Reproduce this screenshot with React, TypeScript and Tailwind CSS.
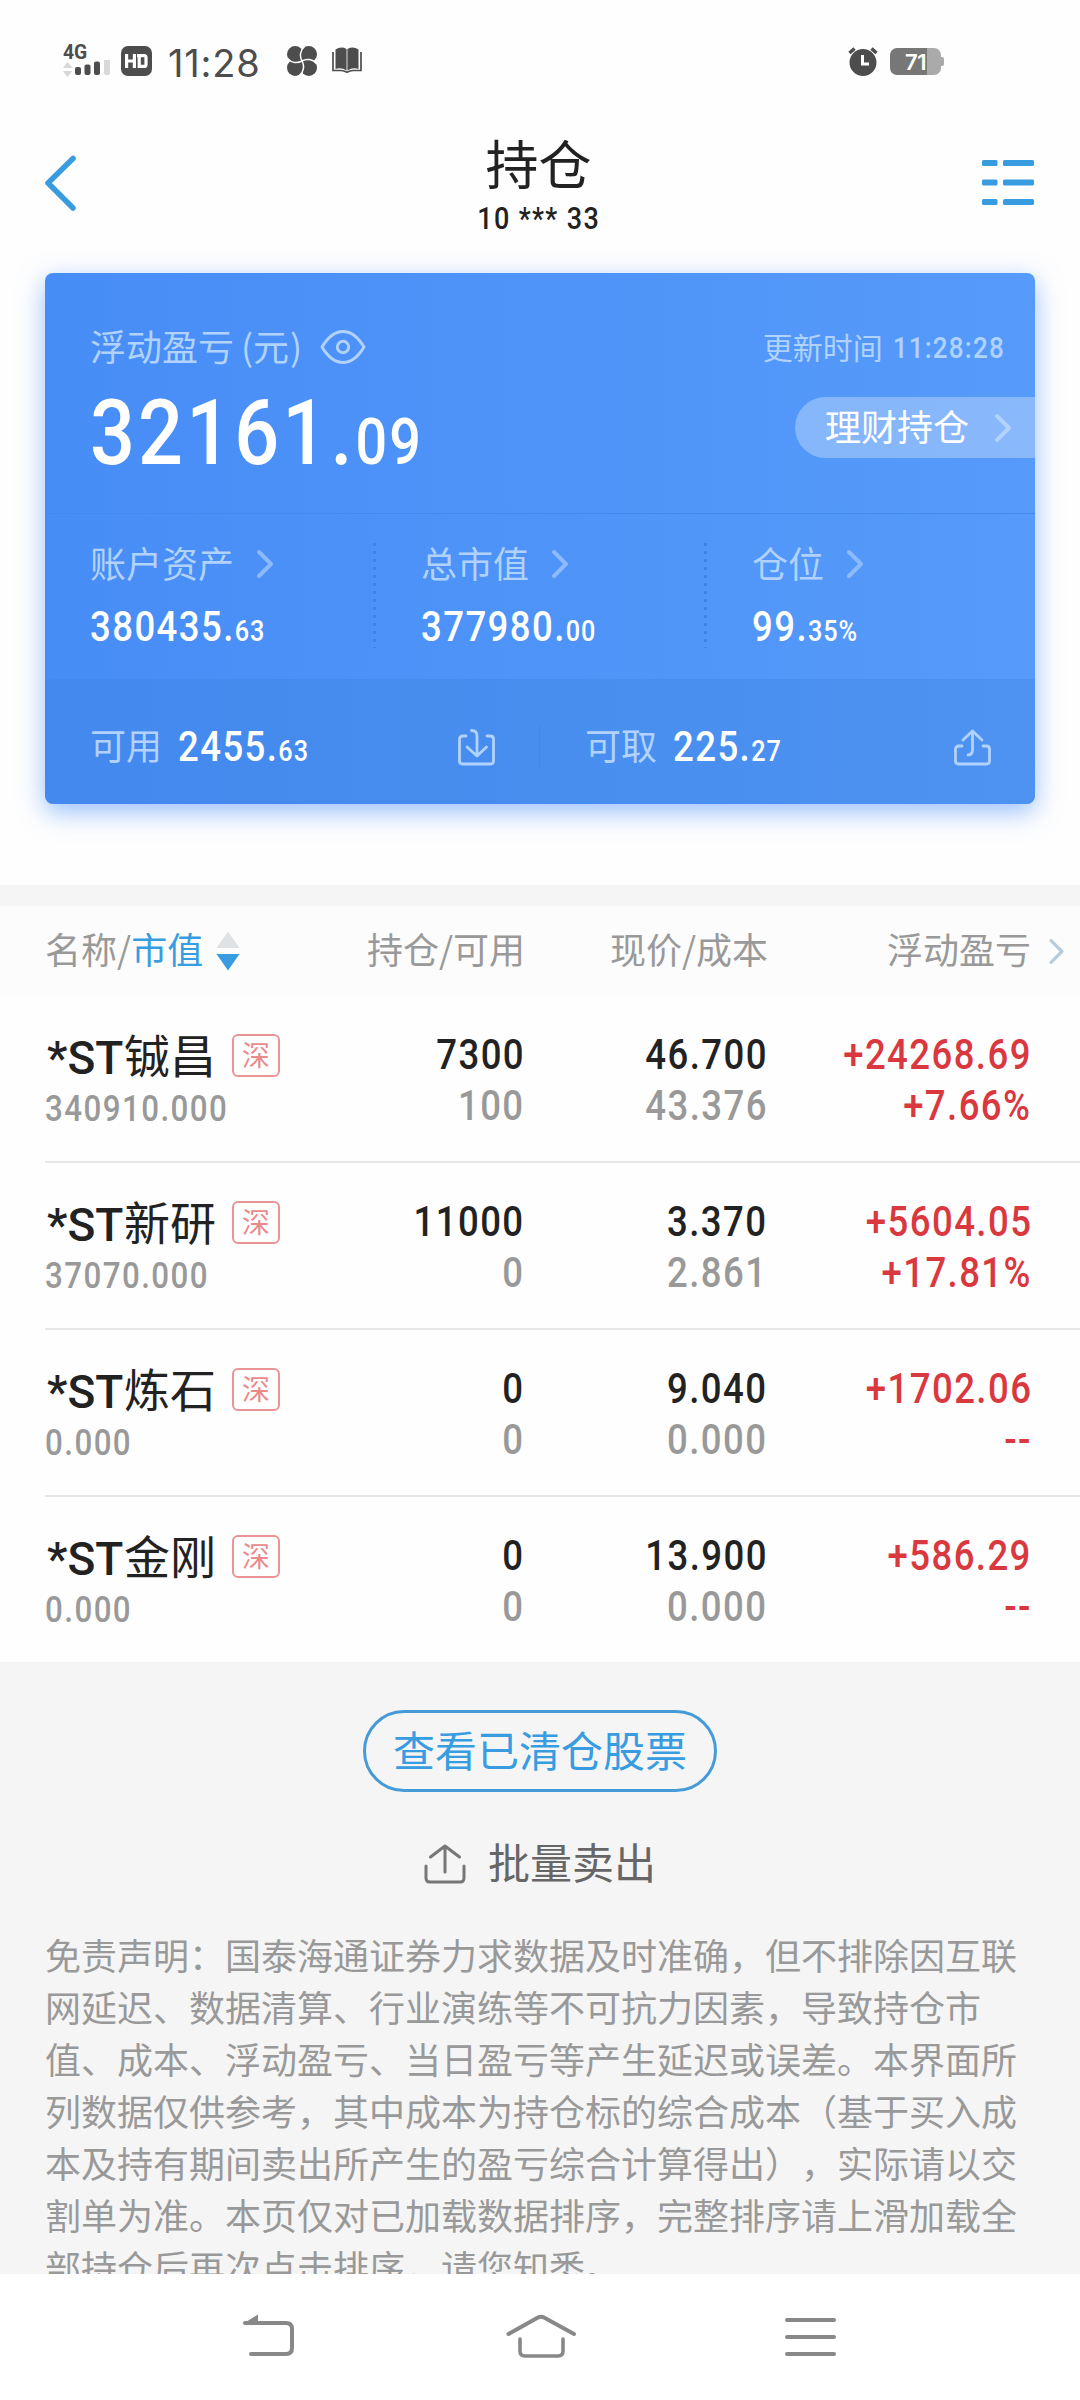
import React from "react";

const CJK = "font-['Noto_Sans_CJK_SC',sans-serif]";

/* Condensed numerals; `right` keeps the right edge fixed when narrowing. */
function Num({ children, right = false, className = "" }: { children: React.ReactNode; right?: boolean; className?: string }) {
  return (
    <span
      className={`inline-block whitespace-nowrap font-['Roboto',sans-serif] font-medium tracking-[0.039em] scale-x-[0.87] leading-none ${
        right ? "origin-right -mr-[0.02em]" : "origin-left"
      } ${className}`}
    >
      {children}
    </span>
  );
}

function Chevron({ className = "", w = 18, h = 30, sw = 4 }: { className?: string; w?: number; h?: number; sw?: number }) {
  return (
    <svg className={`shrink-0 ${className}`} width={w} height={h} viewBox="0 0 18 30" fill="none" stroke="currentColor" strokeWidth={sw} strokeLinecap="round" strokeLinejoin="round">
      <path d="M3 3 L15 15 L3 27" />
    </svg>
  );
}

function StatusBar() {
  return (
    <div className="flex h-[123px] shrink-0 items-start pl-[63px] text-[#4d4d4d]">
      <div className="mt-[44px] w-[47px]">
        <div className="h-[16px] w-[25px] origin-left scale-x-[0.92] font-['Roboto',sans-serif] text-[21px] leading-[16px] font-bold">4G</div>
        <svg width="47" height="19" viewBox="0 0 47 19" className="block">
          <path d="M4.500 2 L9.500 8 H0 Z M0 11 H9.500 L4.500 17 Z" fill="#d8d8d8" />
          <rect x="12" y="7" width="6" height="8" rx="2" fill="#4d4d4d" />
          <rect x="21.500" y="4.500" width="6" height="10.500" rx="2" fill="#4d4d4d" />
          <rect x="31" y="1.500" width="6" height="13.500" rx="2" fill="#4d4d4d" />
          <rect x="41" y="-1" width="6" height="16" rx="2" fill="#d9d9d9" />
        </svg>
      </div>
      <div className="mt-[46px] ml-[11px] flex h-[30px] w-[31px] items-center justify-center rounded-[7px] bg-[#4d4d4d]">
        <svg width="31" height="30" viewBox="0 0 31 30" fill="none" stroke="#fff" strokeWidth="3.200">
          <path d="M5.600 8 V22 M13.400 8 V22 M5.600 15 H13.400 M16 9.600 H23 Q25 9.600 25 11.600 V18.400 Q25 20.400 23 20.400 H18.200 V9.600" />
        </svg>
      </div>
      <div className="mt-[44px] ml-[16px] w-[92px] whitespace-nowrap font-['Inter',sans-serif] text-[38px] leading-[38px] tracking-[0.8px]">11:28</div>
      <svg className="mt-[46px] ml-[27px]" width="30" height="30" viewBox="0 0 30 30">
        <g fill="#4d4d4d">
          <circle cx="8.200" cy="8.200" r="8.200" />
          <circle cx="21.800" cy="8.200" r="8.200" />
          <circle cx="21.800" cy="21.800" r="8.200" />
          <circle cx="8.200" cy="21.800" r="8.200" />
          <rect x="10" y="10" width="10" height="10" />
        </g>
        <g fill="none" stroke="#fefefe" strokeWidth="1.500">
          {[0, 90, 180, 270].map((a) => (
            <path key={a} transform={`rotate(${a} 15 15)`} d="M15 15 C12.500 10.500 12.800 4.500 17.500 0.500" />
          ))}
        </g>
      </svg>
      <svg className="mt-[47px] ml-[15px]" width="30" height="28" viewBox="0 0 30 28">
        <path d="M3.500 2.500 Q9 -1 14.600 2 V23.500 Q9 20 3.500 22 Z M26.500 2.500 Q21 -1 15.400 2 V23.500 Q21 20 26.500 22 Z" fill="#4d4d4d" />
        <path d="M1 5 V23.500 H9 Q12 23.500 15 25.200 Q18 23.500 21 23.500 H29 V5" fill="none" stroke="#4d4d4d" strokeWidth="1.700" />
      </svg>
      <svg className="mt-[47px] ml-[486px]" width="30" height="30" viewBox="0 0 30 30">
        <circle cx="15" cy="15.500" r="13.500" fill="#4d4d4d" />
        <path d="M1.500 6 L6.500 1.500 M28.500 6 L23.500 1.500" stroke="#4d4d4d" strokeWidth="3.500" />
        <path d="M14.500 8 V17 H21" fill="none" stroke="#fff" strokeWidth="3" />
      </svg>
      <div className="mt-[48px] ml-[12px] flex">
        <div className="flex h-[27px] w-[51px] items-center justify-center rounded-[7px] bg-[linear-gradient(90deg,#777_0,#777_37px,#aaa_37px)] font-['Inter',sans-serif] text-[22px] leading-none font-semibold tracking-[-0.500px] text-white">71</div>
        <div className="mt-[9px] h-[9px] w-[3px] rounded-r-[2px] bg-[#aaa]" />
      </div>
    </div>
  );
}

function Header() {
  return (
    <div className="flex h-[150px] shrink-0 items-start justify-between pr-[46px] pl-[43px] text-[#222]">
      <svg className="mt-[30px]" width="52" height="60" viewBox="0 0 52 60" fill="none" stroke="#389ce0" strokeWidth="5.500" strokeLinecap="round" strokeLinejoin="round">
        <path d="M30 5.500 L5 30 L30 55" />
      </svg>
      <div className="flex flex-col items-center">
        <div className={`${CJK} mt-[13px] text-[53px] leading-[53px]`}>持仓</div>
        <div className="mt-[14px] flex h-[32px] w-[122px] justify-center">
          <Num className="!origin-center text-[31px] !tracking-[0.051em]">10 *** 33</Num>
        </div>
      </div>
      <svg className="mt-[35px]" width="52" height="50" viewBox="0 0 52 50" fill="#389ce0">
        {[2, 21.500, 41].map((y) => (
          <g key={y}>
            <rect x="0" y={y} width="15.500" height="6" rx="1.500" />
            <rect x="21" y={y} width="31" height="6" rx="1.500" />
          </g>
        ))}
      </svg>
    </div>
  );
}

/* Fractional part set smaller, with tracking relative to its own size. */
function Dec({ children, className = "text-[29px]" }: { children: React.ReactNode; className?: string }) {
  return <span className={`tracking-[0.039em] ${className}`}>{children}</span>;
}

function Stat({ label, int, dec }: { label: string; int: string; dec: string }) {
  return (
    <div className="w-[331px] shrink-0 pt-[32px] last:w-[280px]">
      <div className="flex items-center text-[#b1d2fc]">
        <span className={`${CJK} h-[36px] text-[36px] leading-[32px]`}>{label}</span>
        <Chevron className="ml-[22px] text-[#8dbafb]" />
      </div>
      <div className="mt-[24px] h-[44px] text-white">
        <Num className="text-[42px]">
          {int}<Dec>{dec}</Dec>
        </Num>
      </div>
    </div>
  );
}

function DottedRule() {
  return <div className="mt-[29px] -ml-[48px] mr-[45px] h-[105px] w-[3px] shrink-0 bg-[repeating-linear-gradient(180deg,#3f85e8_0,#3f85e8_3px,transparent_3px,transparent_8px)]" />;
}

function Card() {
  return (
    <div className="mx-[45px] h-[531px] shrink-0 rounded-[8px] bg-[linear-gradient(90deg,#478df6,#4d93f8_45%,#569bfa)] shadow-[0_8px_26px_rgba(70,141,250,0.55)]">
      <div className="flex h-[241px] justify-between border-b border-[#448aee]">
        <div className="pl-[45px]">
          <div className="mt-[54px] flex h-[40px] items-center text-[#b1d2fc]">
            <span className={`${CJK} text-[36px] leading-[36px] -mt-[5px]`}>浮动盈亏</span>
            <span className={`${CJK} ml-[7px] flex text-[36px] leading-[36px] -mt-[5px]`}>
              <span className="w-[12px]">(</span><span>元</span><span className="ml-[1px]">)</span>
            </span>
            <svg className="ml-[18px] -mt-[1px]" width="46" height="36" viewBox="0 0 46 36" fill="none" stroke="#b1d2fc" strokeWidth="3">
              <path d="M2 18 C5 13 12 2.500 23 2.500 C34 2.500 41 13 44 18 C41 23 34 33.500 23 33.500 C12 33.500 5 23 2 18 Z" strokeLinejoin="round" />
              <circle cx="23" cy="18" r="5.700" />
            </svg>
          </div>
          <div className="mt-[21px] text-white">
            <Num className="text-[91px]">
              32161.<Dec className="text-[64px]">09</Dec>
            </Num>
          </div>
        </div>
        <div className="flex flex-col items-end">
          <div className="mt-[54px] mr-[31px] flex h-[40px] items-center text-[#b1d2fc]">
            <span className={`${CJK} -mt-[3px] text-[30px] leading-[30px]`}>更新时间</span>
            <Num right className="-ml-[7px] mt-[2px] text-[30px] !tracking-[0.045em]">11:28:28</Num>
          </div>
          <div className="mt-[30px] flex h-[61px] w-[240px] items-center rounded-l-full bg-white/30 pl-[30px] text-white">
            <span className={`${CJK} -mt-[5px] text-[36px] leading-[36px]`}>理财持仓</span>
            <Chevron className="ml-[25px] text-[#b4d2fc]" />
          </div>
        </div>
      </div>
      <div className="flex h-[165px] pl-[45px]">
        <Stat label="账户资产" int="380435." dec="63" />
        <DottedRule />
        <Stat label="总市值" int="377980." dec="00" />
        <DottedRule />
        <Stat label="仓位" int="99." dec="35%" />
      </div>
      <div className="flex h-[125px] items-center rounded-b-[8px] bg-[#3c82dc]/30 pt-[10px]">
        <div className="flex w-[494px] items-center pr-[44px] pl-[45px]">
          <span className={`${CJK} -mt-[6px] text-[36px] leading-[36px] text-[#b1d2fc]`}>可用</span>
          <div className="ml-[16px] text-white"><Num className="text-[42px]">2455.<Dec>63</Dec></Num></div>
          <svg className="ml-auto" width="37" height="38" viewBox="0 0 37 38" fill="none" stroke="#b1d2fc" strokeWidth="2.800" strokeLinecap="round" strokeLinejoin="round">
            <path d="M8 8 H5 Q1.500 8 1.500 11 V33 Q1.500 36 5 36 H32 Q35.500 36 35.500 33 V11 Q35.500 8 32 8 H29" />
            <path d="M13.500 2.500 Q19 2.500 19 8 V27 M9 19 L19 28 L28.500 19" />
          </svg>
        </div>
        <div className="h-[42px] w-[1px] bg-[#4485e6]" />
        <div className="flex flex-1 items-center pr-[44px] pl-[45px]">
          <span className={`${CJK} -mt-[6px] text-[36px] leading-[36px] text-[#b1d2fc]`}>可取</span>
          <div className="ml-[16px] text-white"><Num className="text-[42px]">225.<Dec>27</Dec></Num></div>
          <svg className="ml-auto" width="37" height="38" viewBox="0 0 37 38" fill="none" stroke="#b1d2fc" strokeWidth="2.800" strokeLinecap="round" strokeLinejoin="round">
            <path d="M8 18 H5 Q1.500 18 1.500 21 V33 Q1.500 36 5 36 H32 Q35.500 36 35.500 33 V21 Q35.500 18 32 18 H29" />
            <path d="M14 27 Q18.500 27 18.500 21.500 V3 M9 12 L18.500 3 L28 12" />
          </svg>
        </div>
      </div>
    </div>
  );
}

type Row = { name: string; value: string; held: string; avail: string; price: string; cost: string; pnl: string; pct: string };
const rows: Row[] = [
  { name: "铖昌", value: "340910.000", held: "7300", avail: "100", price: "46.700", cost: "43.376", pnl: "+24268.69", pct: "+7.66%" },
  { name: "新研", value: "37070.000", held: "11000", avail: "0", price: "3.370", cost: "2.861", pnl: "+5604.05", pct: "+17.81%" },
  { name: "炼石", value: "0.000", held: "0", avail: "0", price: "9.040", cost: "0.000", pnl: "+1702.06", pct: "--" },
  { name: "金刚", value: "0.000", held: "0", avail: "0", price: "13.900", cost: "0.000", pnl: "+586.29", pct: "--" },
];

function Pair({ a, b, className, second }: { a: string; b: string; className: string; second: string }) {
  return (
    <div className={`flex flex-col items-end pt-[38px] text-[42px] ${className}`}>
      <Num right className="h-[51px]">{a}</Num>
      <Num right className={second}>{b}</Num>
    </div>
  );
}

function HoldingRow({ r, last }: { r: Row; last: boolean }) {
  return (
    <div className={`ml-[45px] flex shrink-0 text-[#222] ${last ? "h-[165px]" : "h-[167px] border-b-2 border-[#e7e7e7]"}`}>
      <div className="w-[240px] pt-[33px]">
        <div className="flex h-[55px] items-center whitespace-nowrap">
          <span className="mt-[2px] w-[79px] pl-[2px] font-['Roboto',sans-serif] text-[46px] leading-none font-medium">*ST</span>
          <span className={`${CJK} -mt-[8px] text-[46px] leading-[46px]`}>{r.name}</span>
          <span className="mt-[-3px] ml-[16px] flex h-[43px] w-[48px] shrink-0 items-center justify-center rounded-[6px] border-2 border-[#ea9496] text-[#ea8a8c]">
            <span className={`${CJK} -mt-[3px] text-[28px] leading-[28px]`}>深</span>
          </span>
        </div>
        <div className="mt-[7px] text-[#999]"><Num className="text-[36px] !tracking-[0.046em]">{r.value}</Num></div>
      </div>
      <Pair a={r.held} b={r.avail} className="w-[239px]" second="text-[#999]" />
      <Pair a={r.price} b={r.cost} className="w-[243px]" second="text-[#999]" />
      <Pair a={r.pnl} b={r.pct} className="w-[264px] text-[#d9383e]" second="" />
    </div>
  );
}

const disclaimer = [
  "免责声明：国泰海通证券力求数据及时准确，但不排除因互联",
  "网延迟、数据清算、行业演练等不可抗力因素，导致持仓市",
  "值、成本、浮动盈亏、当日盈亏等产生延迟或误差。本界面所",
  "列数据仅供参考，其中成本为持仓标的综合成本（基于买入成",
  "本及持有期间卖出所产生的盈亏综合计算得出），实际请以交",
  "割单为准。本页仅对已加载数据排序，完整排序请上滑加载全",
  "部持仓后再次点击排序，请您知悉。",
];

export default function App() {
  return (
    <div className="flex h-[2400px] w-[1080px] flex-col overflow-hidden bg-[#fefefe]">
      <StatusBar />
      <Header />
      <Card />
      <div className="mt-[81px] h-[21px] shrink-0 bg-[#f5f5f5]" />
      <div className={`${CJK} flex h-[90px] shrink-0 items-center bg-[#fcfcfc] pl-[45px] text-[36px] leading-[36px] text-[#999]`}>
        <div className="flex w-[241px] items-center whitespace-nowrap">
          <span className="-mt-[7px]">名称/<span className="text-[#389ce0]">市值</span></span>
          <svg className="ml-[13px]" width="24" height="40" viewBox="0 0 24 40">
            <path d="M12 0.500 L23.500 17 H0.500 Z" fill="#dfe3e5" />
            <path d="M0.500 23 H23.500 L12 39.500 Z" fill="#389ce0" />
          </svg>
        </div>
        <div className="-mt-[7px] w-[239px] text-right">持仓/可用</div>
        <div className="-mt-[7px] w-[243px] text-right">现价/成本</div>
        <div className="-mt-[7px] w-[263px] text-right">浮动盈亏</div>
        <Chevron className="ml-[17px] text-[#b8cbdb]" w={17} h={27} sw={3.6} />
      </div>
      {rows.map((r, i) => (
        <HoldingRow key={r.name} r={r} last={i === rows.length - 1} />
      ))}
      <div className={`${CJK} flex h-[612px] shrink-0 flex-col items-center overflow-hidden bg-[#f5f5f5]`}>
        <div className="mt-[48px] flex h-[82px] w-[354px] shrink-0 items-center justify-center rounded-full border-[3px] border-[#449bd8] text-[42px] leading-[42px] text-[#389ce0]">
          <span className="-mt-[5px]">查看已清仓股票</span>
        </div>
        <div className="mt-[48px] flex h-[48px] shrink-0 items-center text-[#666]">
          <svg className="mr-[22px]" width="42" height="40" viewBox="0 0 42 40" fill="none" stroke="#777" strokeWidth="3" strokeLinecap="round" strokeLinejoin="round">
            <path d="M2 22 V34 Q2 38 6 38 H36 Q40 38 40 34 V22 M21 28 V2 M6.500 13 L21 2 L35.500 13" />
          </svg>
          <span className="-mt-[6px] text-[42px] leading-[42px]">批量卖出</span>
        </div>
        <div className="mt-[40px] w-[990px] text-[36px] leading-[52px] whitespace-pre text-[#999] [text-spacing-trim:space-all]">
          {disclaimer.map((line) => (
            <div key={line}>{line}</div>
          ))}
        </div>
      </div>
      <div className="flex h-[126px] shrink-0 bg-white pt-[40px] pl-[242px]">
        <svg width="53" height="44" viewBox="0 0 53 44" fill="none" stroke="#888" strokeWidth="4">
          <path d="M3 9 H44 Q50 9 50 15 V34 Q50 40 44 40 H9" strokeLinecap="round" />
          <path d="M0.500 10 L16 0.500 V9 Z" fill="#888" stroke="none" />
        </svg>
        <svg className="ml-[210px]" width="73" height="46" viewBox="0 0 73 46" fill="none" stroke="#888" strokeWidth="4" strokeLinecap="round" strokeLinejoin="round">
          <path d="M3.500 20 L33 3.500 Q36 2 39 3.500 L69 20" />
          <path d="M15 25 V37 Q15 42 20 42 H53 Q58 42 58 37 V25" strokeWidth="3.600" />
        </svg>
        <svg className="ml-[206px]" width="54" height="44" viewBox="0 0 54 44" fill="none" stroke="#888" strokeWidth="4" strokeLinecap="round">
          <path d="M3 6 H50 M3 23 H50 M3 40 H50" />
        </svg>
      </div>
    </div>
  );
}
